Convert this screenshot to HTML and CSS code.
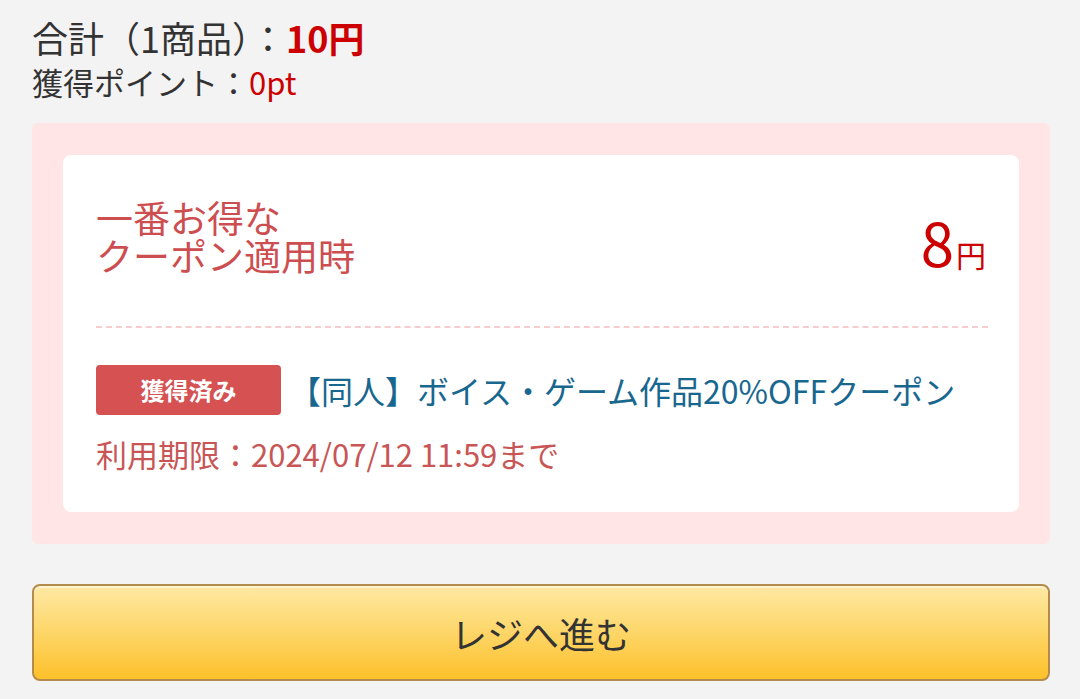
FILE: index.html
```html
<!DOCTYPE html>
<html lang="ja">
<head>
    <meta charset="UTF-8">
    <meta name="viewport" content="width=device-width, initial-scale=1.0">
    <title>カート</title>
    <link rel="stylesheet" href="styles.css">
</head>
<body>
    <div class="cart-summary">
        <div class="total">合計（1商品）：<span class="price strong">10円</span></div>
        <div class="points">獲得ポイント：<span class="price">0pt</span></div>

        <div class="coupon-box">
            <div class="coupon-card">
                <div class="coupon-head">
                    <div class="coupon-title">一番お得な<br>クーポン適用時</div>
                    <div class="coupon-price">8<span class="yen">円</span></div>
                </div>
                <div class="coupon-body">
                    <div class="coupon-row">
                        <span class="badge">獲得済み</span>
                        <a class="coupon-name" href="#">【同人】ボイス・ゲーム作品20%OFFクーポン</a>
                    </div>
                    <div class="coupon-limit">利用期限：2024/07/12 11:59まで</div>
                </div>
            </div>
        </div>

        <button class="checkout">レジへ進む</button>
    </div>
</body>
</html>
```

FILE: styles.css
```css
body {
    margin: 0;
    background-color: #f3f3f3;
    font-family: "Noto Sans CJK JP", "Noto Sans", sans-serif;
    color: #333;
}
.cart-summary {
    padding: 12px 30px 0 32px;
}
.total {
    font-size: 36px;
    line-height: 50px;
}
.points {
    font-size: 31px;
    line-height: 40px;
}
.price {
    color: #cc0000;
}
.strong {
    font-weight: bold;
}
.coupon-box {
    margin-top: 21px;
    background-color: #ffe5e5;
    border-radius: 6px;
    padding: 32px 31px;
}
.coupon-card {
    background-color: #fff;
    border-radius: 8px;
    padding: 0 31px 0 33px;
}
.coupon-head {
    display: flex;
    align-items: center;
    justify-content: space-between;
    height: 171px;
    border-bottom: 2px dashed #f6cccc;
    padding-right: 2px;
}
.coupon-title {
    font-size: 37px;
    line-height: 38px;
    color: #cd4e50;
    margin-bottom: 10px;
}
.coupon-price {
    font-size: 60px;
    color: #cc0000;
    line-height: 1;
}
.yen {
    font-size: 30px;
    margin-left: 2px;
}
.coupon-body {
    padding: 37px 0 38px;
}
.coupon-row {
    display: flex;
    align-items: center;
    gap: 8px;
    height: 50px;
}
.badge {
    display: inline-block;
    width: 185px;
    height: 50px;
    line-height: 50px;
    text-align: center;
    background-color: #d55152;
    color: #fff;
    font-size: 24px;
    font-weight: bold;
    border-radius: 4px;
}
.coupon-name {
    color: #18678f;
    text-decoration: none;
    font-size: 32px;
}
.coupon-limit {
    margin-top: 19px;
    color: #c85656;
    font-size: 31px;
    line-height: 40px;
}
.checkout {
    display: block;
    width: 100%;
    margin-top: 40px;
    height: 97px;
    border: 2px solid #b38c4c;
    border-radius: 8px;
    background: linear-gradient(to bottom, #fee8a4 0%, #fdd86e 45%, #fdc02a 100%);
    box-shadow: inset 0 2px 0 #fff3cf;
    font-family: "Noto Sans CJK JP", "Noto Sans", sans-serif;
    font-size: 36px;
    color: #333;
    cursor: pointer;
}
```
